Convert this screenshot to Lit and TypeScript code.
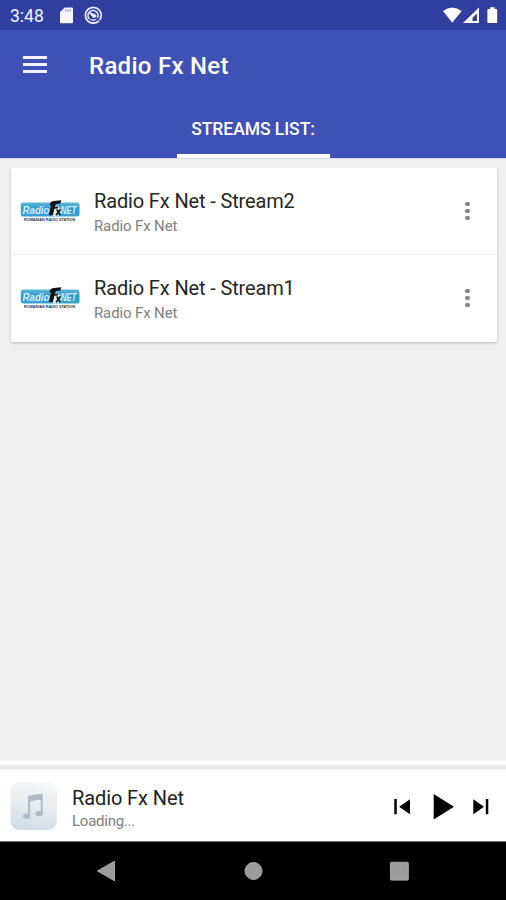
import { LitElement, html, css } from "lit";
import { customElement, property } from "lit/decorators.js";

@customElement("status-bar")
class StatusBar extends LitElement {
  static styles = css`
    :host { display: flex; height: 30px; background: #303f9f; color: #f2f3fc; align-items: center; justify-content: space-between; }
    .left { display: flex; align-items: center; }
    .time { font-size: 17.5px; margin-left: 10px; width: 50px; line-height: 30px; padding-top: 1px; }
    svg { display: block; }
  `;
  render() {
    return html`
      <div class="left">
        <span class="time">3:48</span>
        <svg width="46" height="30" viewBox="60 0 46 30">
          <path d="M64.800 7.500h7.200q1 0 1 1v13.700q0 1-1 1H61q-1 0-1-1V12z" fill="#f4f5fd" />
          <path d="M65.800 9.300v2.400M68 9.300v2.400M70.200 9.300v2.400" stroke="#8d96cf" stroke-width="1.100" />
          <circle cx="93.300" cy="15.300" r="7.900" fill="none" stroke="#f0f1fc" stroke-width="1.700" />
          <path d="M89.400 18.900a5 5 0 1 1 8-1" fill="none" stroke="#e9ebfa" stroke-width="1.600" />
          <path d="M89.200 12.400l6.200 2.300q1.300 1.300 0 2.400q-1.500 1-2.600-.2zM90.200 19.400q3.200 2 6.200 0" fill="#f0f1fc" stroke="#f0f1fc" stroke-width=".8" />
          <path d="M97.600 18.800l3 2.500" stroke="#303f9f" stroke-width="1.100" />
        </svg>
      </div>
      <svg width="66" height="30" viewBox="440 0 66 30" fill="#fff">
        <path d="M443 11Q452.300 4 461.600 11L452.300 22.800z" />
        <path fill-rule="evenodd" d="M463 22.900L479 7.400V22.900zM470 20.900H476.900V13.400L472.500 17.800V20.900z" />
        <path d="M490 7.200h4.600v1.700h1.700q.9 0 .9.900v12.400q0 .9-.9.900h-8q-.9 0-.9-.9V9.800q0-.9.900-.9H490z" />
      </svg>`;
  }
}

@customElement("app-header")
class AppHeader extends LitElement {
  static styles = css`
    :host { display: flex; flex-direction: column; height: 128px; background: #3f51b5; color: #fff; }
    .bar { display: flex; align-items: center; height: 71px; }
    .menu { display: flex; flex-direction: column; gap: 4px; width: 23.500px; margin-left: 23px; margin-top: -2px; }
    .menu i { height: 3px; background: #f0f1fa; }
    .title { font-size: 24px; font-weight: 500; letter-spacing: .28px; margin-left: 42.500px; line-height: 30px; white-space: nowrap; }
    .tabs { display: flex; justify-content: center; height: 57px; }
    .tab { box-sizing: border-box; width: 153px; height: 57px; border-bottom: 4px solid #fff; display: flex; justify-content: center; font-size: 17.500px; font-weight: 500; letter-spacing: -.05px; line-height: 56px; white-space: nowrap; }
  `;
  render() {
    return html`
      <div class="bar">
        <div class="menu"><i></i><i></i><i></i></div>
        <span class="title">Radio Fx Net</span>
      </div>
      <div class="tabs"><span class="tab">STREAMS LIST:</span></div>`;
  }
}

@customElement("stream-row")
class StreamRow extends LitElement {
  @property() name = "";
  @property() station = "";
  static styles = css`
    :host { display: flex; height: 86px; align-items: center; }
    .logo { display: block; margin-left: 9px; }
    .mark { font: italic 700 11px "Liberation Sans", sans-serif; }
    .tag { font: 700 3.800px "Liberation Sans", sans-serif; }
    .text { margin-left: 14.500px; padding-top: 4px; flex: 1; white-space: nowrap; }
    .name { font-size: 20px; line-height: 26px; letter-spacing: -.14px; color: #262626; }
    .station { font-size: 15px; line-height: 24px; letter-spacing: -.13px; color: #808080; }
    .more { display: flex; flex-direction: column; gap: 2.400px; width: 4.600px; margin-right: 27.500px; }
    .more i { height: 4.600px; border-radius: 50%; background: #858585; }
  `;
  render() {
    return html`
      <svg class="logo" width="60" height="28" viewBox="0 0 60 28" overflow="visible">
        <defs>
          <linearGradient id="g" x2="0" y2="1">
            <stop offset="0" stop-color="#62b5da" /><stop offset=".45" stop-color="#2a9ccd" /><stop offset="1" stop-color="#3aa2d0" />
          </linearGradient>
        </defs>
        <rect x=".8" y="5.500" width="58.700" height="14" rx="2.500" fill="url(#g)" />
        <g class="mark">
          <text x="2.500" y="16.600" fill="#d4eef8" textLength="27" lengthAdjust="spacingAndGlyphs">Radio</text>
          <text x="40.500" y="16.600" fill="#d4eef8" textLength="16" lengthAdjust="spacingAndGlyphs">NET</text>
        </g>
        <path d="M32.500 9.500l5-1 3.500 3.500-1 6-4 1.500-5-1z" fill="#dff1f8" />
        <path d="M29.500 8q.8-3.800 4.600-4l7.200-.8-.9 3.200-4.600.5-.8 2.800 3.400-.2-.8 2-3.200.2-1.600 6.800-3.800-.6 1.600-7.200.5-2.500z" fill="#101214" />
        <path d="M36.800 12.500l3.400 5.800M40.600 12.300l-4.600 6" stroke="#111" stroke-width="1.700" />
        <text class="tag" x="4" y="23.800" fill="#173c4b" textLength="51" lengthAdjust="spacingAndGlyphs">ROMANIAN RADIO STATION</text>
      </svg>
      <div class="text">
        <div class="name">${this.name}</div>
        <div class="station">${this.station}</div>
      </div>
      <div class="more"><i></i><i></i><i></i></div>`;
  }
}

@customElement("mini-player")
class MiniPlayer extends LitElement {
  static styles = css`
    :host { display: flex; height: 72px; background: #fff; align-items: center; box-sizing: border-box; border-bottom: 1px solid #777; }
    .art { display: block; margin-left: 10px; }
    .text { margin-left: 15px; padding-top: 8px; flex: 1; white-space: nowrap; }
    .name { font-size: 20px; line-height: 24px; letter-spacing: -.1px; color: #222; }
    .state { font-size: 15px; line-height: 23px; letter-spacing: -.25px; color: #808080; }
    .controls { display: block; margin-top: 2px; }
  `;
  render() {
    return html`
      <svg class="art" width="47" height="48" viewBox="0 0 47 48">
        <defs>
          <linearGradient id="a" x1=".6" x2=".4" y2="1">
            <stop offset="0" stop-color="#f5f7f8" /><stop offset=".5" stop-color="#e7ebef" /><stop offset="1" stop-color="#d2dce5" />
          </linearGradient>
        </defs>
        <rect x=".5" y="0" width="46.500" height="48" rx="9" fill="url(#a)" />
        <g fill="#b2bac5">
          <path d="M18 14q6.500-2 14.700-2.200V31.500h-2V17.800q-5.500.2-10.500 1.600V34H18z" />
          <ellipse cx="16.700" cy="34.200" rx="3.700" ry="2.600" /><ellipse cx="29" cy="31.700" rx="3.700" ry="2.600" />
        </g>
      </svg>
      <div class="text">
        <div class="name">Radio Fx Net</div>
        <div class="state">Loading...</div>
      </div>
      <svg class="controls" width="116" height="40" viewBox="390 787 116 40">
        <path d="M394.300 799h2.500v15.300h-2.500zM410 799.300v15L399.200 806.800zM433.700 794v25.400L454 806.800zM473.300 799.300v15L484 806.800zM485.800 799h2.500v15.300h-2.500z" />
      </svg>`;
  }
}

@customElement("nav-bar")
class NavBar extends LitElement {
  static styles = css`
    :host { display: block; height: 58px; background: #000; }
    svg { display: block; }
  `;
  render() {
    return html`<svg width="506" height="58" viewBox="0 842 506 58" fill="#9b9b9b" stroke="#a6a6a6" stroke-width="1">
      <path d="M97.500 871L114.500 861.200V880.800z" />
      <circle cx="253.500" cy="871" r="8.500" />
      <rect x="390.500" y="862.300" width="17.800" height="17.800" rx="1" />
    </svg>`;
  }
}

@customElement("app-root")
class AppRoot extends LitElement {
  static styles = css`
    :host { display: flex; flex-direction: column; height: 900px; background: #f0f0f0; font-family: Roboto, sans-serif; overflow: hidden; }
    .content { flex: 1; padding: 10px 9px 0 10.500px; border-top: 1px solid #d9dbe8; box-sizing: border-box; }
    .card { background: #fff; height: 174px; margin-top: -1px; box-shadow: 0 1px 2px rgba(0,0,0,.16), 0 1px 4px rgba(0,0,0,.08); clip-path: inset(0 -6px -6px -6px); }
    .line { height: 1px; background: #ececec; }
    .edge { height: 9px; background: linear-gradient(#fff 0 3px, #eee 4px, #e4e4e4 7px, #f6f6f6 9px); }
  `;
  render() {
    return html`
      <status-bar></status-bar>
      <app-header></app-header>
      <div class="content">
        <div class="card">
          <stream-row name="Radio Fx Net - Stream2" station="Radio Fx Net"></stream-row>
          <div class="line"></div>
          <stream-row name="Radio Fx Net - Stream1" station="Radio Fx Net"></stream-row>
        </div>
      </div>
      <div class="edge"></div>
      <mini-player></mini-player>
      <nav-bar></nav-bar>`;
  }
}
